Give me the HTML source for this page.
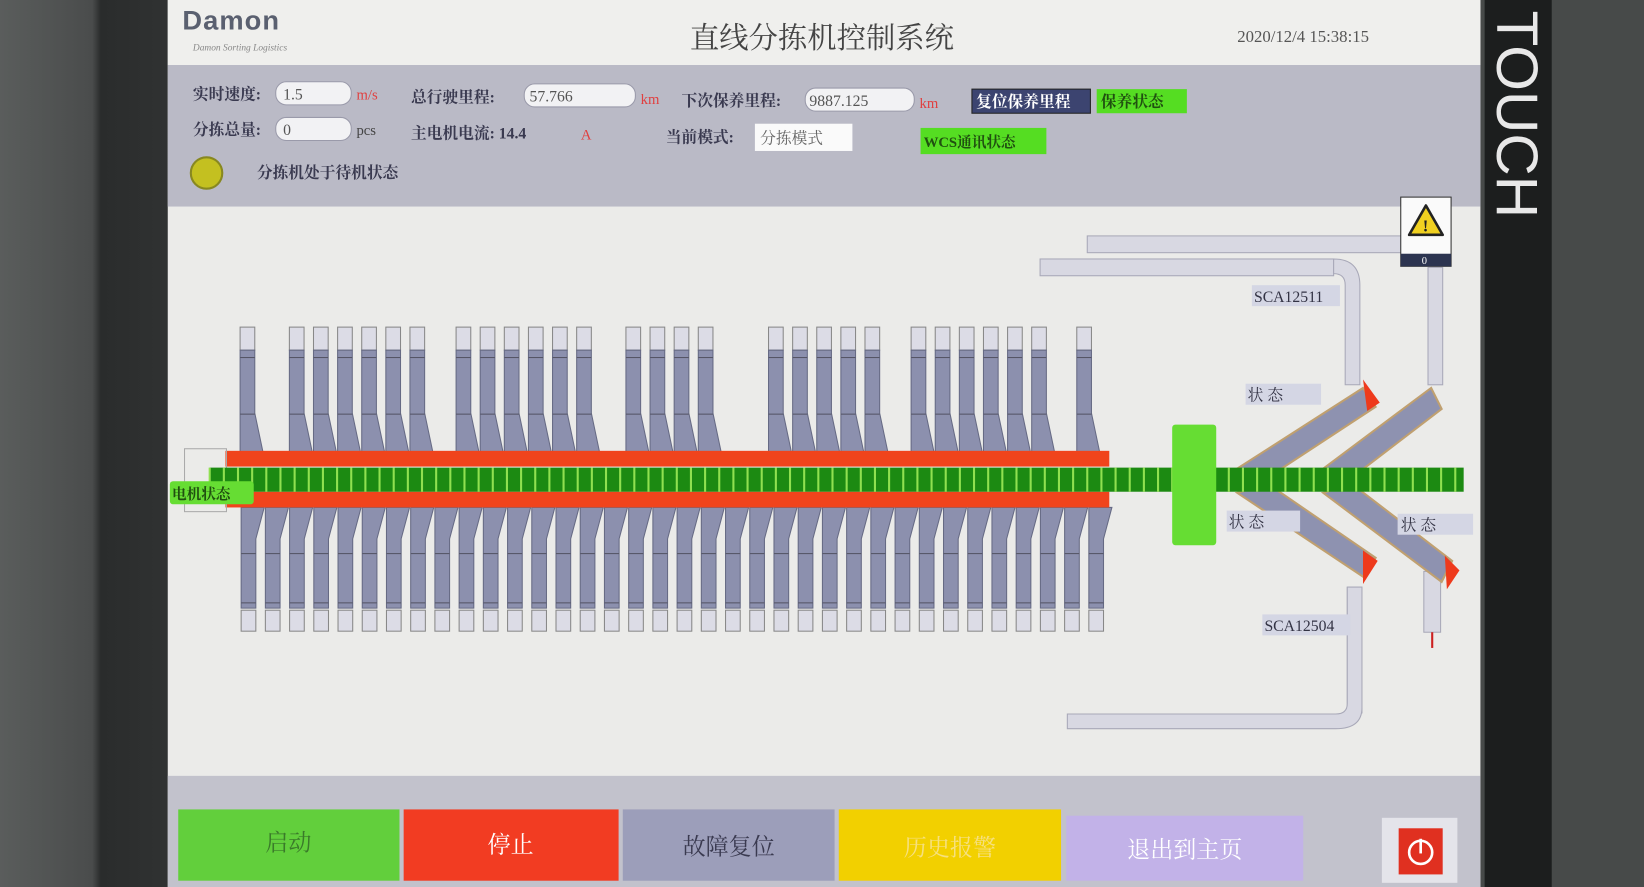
<!DOCTYPE html>
<html><head><meta charset="utf-8"><style>
html,body{margin:0;padding:0;width:1644px;height:887px;overflow:hidden;background:#3a3c3c}
svg{display:block}
text{font-family:"Liberation Serif","Noto Serif CJK SC","Noto Sans CJK SC",serif}
</style></head><body>
<svg id="s" width="1644" height="887" viewBox="0 0 1568 846" preserveAspectRatio="none" xmlns="http://www.w3.org/2000/svg">
<defs>
<linearGradient id="lb" x1="0" x2="1"><stop offset="0" stop-color="#5a5d5c"/><stop offset="0.55" stop-color="#4a4c4c"/><stop offset="0.6" stop-color="#2a2c2c"/><stop offset="1" stop-color="#303232"/></linearGradient>
</defs>
<rect x="0" y="0" width="160" height="846" fill="url(#lb)"/>
<rect x="1410" y="0" width="158" height="846" fill="#474a49"/>
<rect x="1416" y="0" width="64" height="846" fill="#1c1e1e"/>
<text x="0" y="0" transform="translate(1428,10) rotate(90)" font-size="56" fill="#e8e8e8" style="font-family:'Liberation Sans',sans-serif">TOUCH</text>
<rect x="160" y="0" width="1252" height="846" fill="#ebebe9"/>
<rect x="160" y="0" width="1252" height="62" fill="#efefed"/>
<rect x="160" y="62" width="1252" height="135" fill="#babac6"/>
<rect x="160" y="740" width="1252" height="106" fill="#c2c2cc"/>
<text x="174" y="28" font-size="26" font-weight="bold" fill="#5a6070" style="font-family:'Liberation Sans',sans-serif;letter-spacing:1px">Damon</text>
<text x="184" y="48" font-size="9" font-style="italic" fill="#888">Damon Sorting Logistics</text>
<text x="658" y="46" font-size="28" fill="#444">直线分拣机控制系统</text>
<text x="1180" y="40" font-size="16" fill="#555">2020/12/4 15:38:15</text>
<g font-size="15" font-weight="bold" fill="#3a3a50">
<text x="184" y="95">实时速度:</text>
<text x="184" y="129">分拣总量:</text>
<text x="392" y="98">总行驶里程:</text>
<text x="392" y="132">主电机电流: 14.4</text>
<text x="650" y="101">下次保养里程:</text>
<text x="635" y="136">当前模式:</text>
<text x="245" y="170">分拣机处于待机状态</text>
</g>
<rect x="263" y="78" width="72" height="22" rx="10" fill="#f2f2f4" stroke="#9a9aaa"/>
<text x="270" y="95" font-size="15" fill="#555">1.5</text>
<text x="340" y="95" font-size="14" fill="#e04040">m/s</text>
<rect x="263" y="112" width="72" height="22" rx="10" fill="#f2f2f4" stroke="#9a9aaa"/>
<text x="270" y="129" font-size="15" fill="#555">0</text>
<text x="340" y="129" font-size="14" fill="#444">pcs</text>
<rect x="500" y="80" width="106" height="22" rx="10" fill="#f2f2f4" stroke="#9a9aaa"/>
<text x="505" y="97" font-size="15" fill="#555">57.766</text>
<text x="611" y="99" font-size="14" fill="#e04040">km</text>
<text x="554" y="133" font-size="14" fill="#e04040">A</text>
<rect x="768" y="84" width="104" height="22" rx="10" fill="#f2f2f4" stroke="#9a9aaa"/>
<text x="772" y="101" font-size="15" fill="#555">9887.125</text>
<text x="877" y="103" font-size="14" fill="#e04040">km</text>
<rect x="720" y="118" width="93" height="26" fill="#fafafa"/>
<text x="725" y="137" font-size="15" fill="#666">分拣模式</text>
<rect x="927" y="85" width="113" height="23" fill="#3c4470" stroke="#222"/>
<text x="931" y="102" font-size="15" font-weight="bold" fill="#fff">复位保养里程</text>
<rect x="1046" y="85" width="86" height="23" fill="#55dd22"/>
<text x="1050" y="102" font-size="15" font-weight="bold" fill="#205010">保养状态</text>
<rect x="878" y="122" width="120" height="25" fill="#55dd22"/>
<text x="881" y="140" font-size="14" font-weight="bold" fill="#205010">WCS通讯状态</text>
<circle cx="197" cy="165" r="15" fill="#c4c020" stroke="#888820" stroke-width="2"/>
<g fill="#d8d8e2" stroke="#a8a8b8">
<rect x="1037" y="225" width="300" height="16"/>
<rect x="992" y="247" width="280" height="16"/>
<path d="M1272 247 q25 0 25 25 v95 h-14 v-95 q0-11-11-11z"/>
<rect x="1362" y="255" width="14" height="112"/>
<rect x="1285" y="560" width="14" height="120"/>
<path d="M1299 560 v115 q0 20 -25 20 h-256 v-14 h256 q11 0 11-10 v-111z"/>
<rect x="1358" y="545" width="16" height="58"/>
</g>
<rect x="1336" y="188" width="48" height="66" fill="#fafafa" stroke="#333"/>
<rect x="1336" y="242" width="48" height="12" fill="#2c3450"/>
<text x="1356" y="252" font-size="10" fill="#fff">0</text>
<path d="M1360 196 l16 28 h-32z" fill="#f0d020" stroke="#222" stroke-width="2.5" stroke-linejoin="round"/>
<text x="1357" y="221" font-size="16" font-weight="bold" fill="#222">!</text>
<rect x="1194" y="272" width="84" height="20" fill="#d4d6e4"/>
<text x="1196" y="288" font-size="15" fill="#334">SCA12511</text>
<rect x="1204" y="586" width="84" height="20" fill="#d4d6e4"/>
<text x="1206" y="602" font-size="15" fill="#334">SCA12504</text>
<g fill="#8e92b0" stroke="#c0a070" stroke-width="2">
<path d="M1180 447 L1300 370 L1312 388 L1210 455z"/>
<path d="M1180 470 L1300 550 L1312 532 L1210 462z"/>
<path d="M1262 447 L1365 370 L1375 390 L1290 455z"/>
<path d="M1262 470 L1375 555 L1385 535 L1290 462z"/>
</g>
<g fill="#ee3a1c"><path d="M1300 362 l16 22 l-12 8z"/><path d="M1300 557 l14 -22 l-14 -10z"/><path d="M1378 530 l14 14 l-12 18z"/></g>
<line x1="1366" y1="603" x2="1366" y2="618" stroke="#cc2020" stroke-width="2"/>
<rect x="1188" y="366" width="72" height="20" fill="#d4d6e4"/><text x="1190" y="382" font-size="15" fill="#334">状  态</text>
<rect x="1170" y="487" width="70" height="20" fill="#d4d6e4"/><text x="1172" y="503" font-size="15" fill="#334">状  态</text>
<rect x="1333" y="490" width="72" height="20" fill="#d4d6e4"/><text x="1336" y="506" font-size="15" fill="#334">状  态</text>
<g id="chutes"></g>
<rect x="215" y="430" width="843" height="15" fill="#f0441c"/>
<rect x="215" y="469" width="843" height="15" fill="#f0441c"/>
<rect x="176" y="428" width="40" height="60" fill="none" stroke="#aaa"/>
<g id="conv"></g>
<rect x="1118" y="405" width="42" height="115" rx="3" fill="#66dd33"/>
<rect x="162" y="459" width="80" height="22" rx="3" fill="#66dd33"/>
<text x="164" y="476" font-size="14" fill="#205010" font-weight="bold">电机状态</text>
<rect x="170" y="772" width="211" height="68" fill="#62cf3c"/>
<rect x="385" y="772" width="205" height="68" fill="#f23c22"/>
<rect x="594" y="772" width="202" height="68" fill="#9c9eba"/>
<rect x="800" y="772" width="212" height="68" fill="#f2d000"/>
<rect x="1017" y="778" width="226" height="62" fill="#c2b2e8"/>
<g font-size="22" text-anchor="middle">
<text x="275" y="811" fill="#3a7a2a">启动</text>
<text x="487" y="813" fill="#fff">停止</text>
<text x="695" y="815" fill="#3a3a50">故障复位</text>
<text x="906" y="816" fill="#f6e080">历史报警</text>
<text x="1130" y="818" fill="#fff">退出到主页</text>
</g>
<rect x="1318" y="780" width="72" height="62" fill="#e4e4ea"/>
<rect x="1334" y="790" width="42" height="44" fill="#e03020"/>
<circle cx="1355" cy="813" r="11" fill="none" stroke="#fff" stroke-width="2.5"/>
<line x1="1355" y1="800" x2="1355" y2="814" stroke="#fff" stroke-width="2.5"/>
</svg>
<script>
(function(){
var NS="http://www.w3.org/2000/svg";
function el(p,t,a){var e=document.createElementNS(NS,t);for(var k in a)e.setAttribute(k,a[k]);p.appendChild(e);return e;}
var ch=document.getElementById("chutes"),cv=document.getElementById("conv");
var tops=[229,276,299,322,345,368,391,435,458,481,504,527,550,597,620,643,666,733,756,779,802,825,869,892,915,938,961,984,1027];
tops.forEach(function(x){
 el(ch,"rect",{x:x,y:312,width:14,height:22,fill:"#dcdce6",stroke:"#888"});
 el(ch,"path",{d:"M"+x+" 334 h14 v60 l8 38 h-22z",fill:"#8c90ae",stroke:"#666a84"});
 el(ch,"line",{x1:x,y1:341,x2:x+14,y2:341,stroke:"#556"});
 el(ch,"line",{x1:x,y1:395,x2:x+14,y2:395,stroke:"#556"});
});
for(var x=230;x<1040;x+=23.1){
 el(ch,"path",{d:"M"+x+" 484 h22 l-8 30 v66 h-14z",fill:"#8c90ae",stroke:"#666a84"});
 el(ch,"line",{x1:x,y1:528,x2:x+14,y2:528,stroke:"#556"});
 el(ch,"line",{x1:x,y1:575,x2:x+14,y2:575,stroke:"#556"});
 el(ch,"rect",{x:x,y:582,width:14,height:20,fill:"#dcdce6",stroke:"#888"});
}
el(cv,"rect",{x:200,y:446,width:1196,height:23,fill:"#1c8a12"});
for(var x2=200;x2<1396;x2+=13.5){el(cv,"line",{x1:x2,y1:446,x2:x2,y2:469,stroke:"#90e050","stroke-width":2});}
})();
</script>
</body></html>
